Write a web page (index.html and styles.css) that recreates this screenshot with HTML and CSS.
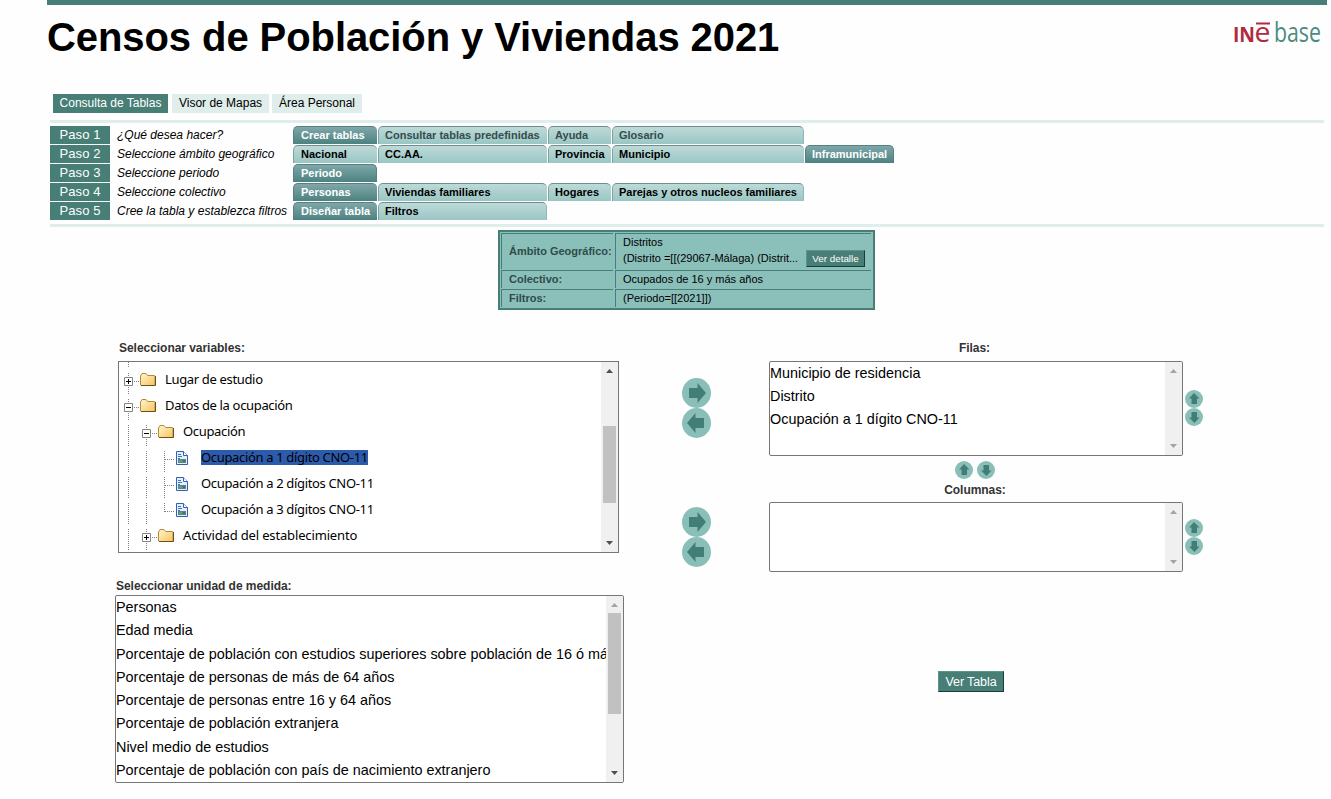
FILE: index.html
```html
<!DOCTYPE html>
<html lang="es">
<head>
<meta charset="utf-8">
<title>Censos de Población y Viviendas 2021</title>
<link rel="stylesheet" href="styles.css">
</head>
<body>
<svg class="defs" aria-hidden="true">
  <defs>
    <linearGradient id="fold" x1="0" y1="0" x2="1" y2="1"><stop offset="0" stop-color="#fff6cf"/><stop offset="1" stop-color="#f6c35c"/></linearGradient>
    <symbol id="folder" viewBox="0 0 16 13"><path d="M.5 12V3l1.500-2.500h4L7.500 2.500h7l.5.500v9.500H1z" fill="url(#fold)" stroke="#b48a3c"/><path d="M1 12.500H15.500V3" fill="none" stroke="#6b4f1c"/></symbol>
    <symbol id="file" viewBox="0 0 12 14"><path d="M.5.500h7l4 4v9H.5z" fill="#e4f0fd" stroke="#2f62b4"/><path d="M7.500.500v4h4" fill="#fff" stroke="#2f62b4"/><path d="M2 3.500h3M2 5.500h4M2 7.500h2" stroke="#4471bd"/><path d="M2 8h8v4H2z" fill="#6b7c92"/><path d="M3 9h3v2H3z" fill="#50ad5d"/><path d="M7 9h2v2H7z" fill="#30844b"/></symbol>
    <symbol id="right" viewBox="0 0 29 30"><ellipse cx="14.500" cy="15" rx="14.500" ry="15" fill="#8abfb8"/><path d="M7 10h8.500V5L24 15l-8.500 10v-5H7z" fill="#437e76"/></symbol>
    <symbol id="left" viewBox="0 0 29 30"><ellipse cx="14.500" cy="15" rx="14.500" ry="15" fill="#8abfb8"/><path d="M22 10h-8.500V5L5 15l8.500 10v-5H22z" fill="#437e76"/></symbol>
    <symbol id="up" viewBox="0 0 18 18"><circle cx="9" cy="9" r="9" fill="#8abfb8"/><path d="M9 3l5.500 5.500H12V14H6.500V8.500H4z" fill="#437e76"/></symbol>
    <symbol id="down" viewBox="0 0 18 18"><circle cx="9" cy="9" r="9" fill="#8abfb8"/><path d="M9.500 15L4 9.500h2.500V4H12v5.500h2.500z" fill="#437e76"/></symbol>
    <symbol id="plus" viewBox="0 0 9 9"><path d="M.5.500h8v8h-8z" fill="#fff" stroke="#848484"/><path d="M2 4.500h5M4.500 2v5" stroke="#000"/></symbol>
    <symbol id="minus" viewBox="0 0 9 9"><path d="M.5.500h8v8h-8z" fill="#fff" stroke="#848484"/><path d="M2 4.500h5" stroke="#000"/></symbol>
    <symbol id="sup" viewBox="0 0 7 4"><path d="M3.500 0L7 4H0z" fill="currentColor"/></symbol>
    <symbol id="sdown" viewBox="0 0 7 4"><path d="M0 0h7L3.500 4z" fill="currentColor"/></symbol>
  </defs>
</svg>
<div class="topbar"></div>
<header class="header">
  <h1 class="title">Censos de Población y Viviendas 2021</h1>
  <svg class="logo" viewBox="0 0 90 34"><text class="logo-in" x="1" y="28" textLength="22" lengthAdjust="spacingAndGlyphs">IN</text><text class="logo-e" x="22.500" y="28" textLength="16" lengthAdjust="spacingAndGlyphs">e</text><path d="M24 9.500h14" stroke="#b22a40" stroke-width="2"/><text class="logo-base" x="42" y="28" textLength="47" lengthAdjust="spacingAndGlyphs">base</text></svg>
</header>
<nav class="nav"><a class="nav-item nav-on">Consulta de Tablas</a><a class="nav-item nav-maps">Visor de Mapas</a><a class="nav-item nav-area">Área Personal</a></nav>
<section class="steps">
  <div class="step"><b class="paso">Paso 1</b><i class="what">¿Qué desea hacer?</i><a class="tab on">Crear tablas</a><a class="tab dim">Consultar tablas predefinidas</a><a class="tab dim">Ayuda</a><a class="tab dim">Glosario</a></div>
  <div class="step"><b class="paso">Paso 2</b><i class="what">Seleccione ámbito geográfico</i><a class="tab">Nacional</a><a class="tab">CC.AA.</a><a class="tab">Provincia</a><a class="tab">Municipio</a><a class="tab on">Inframunicipal</a></div>
  <div class="step"><b class="paso">Paso 3</b><i class="what">Seleccione periodo</i><a class="tab on">Periodo</a></div>
  <div class="step"><b class="paso">Paso 4</b><i class="what">Seleccione colectivo</i><a class="tab on">Personas</a><a class="tab">Viviendas familiares</a><a class="tab">Hogares</a><a class="tab">Parejas y otros nucleos familiares</a></div>
  <div class="step"><b class="paso">Paso 5</b><i class="what">Cree la tabla y establezca filtros</i><a class="tab on">Diseñar tabla</a><a class="tab">Filtros</a></div>
</section>
<section class="summary">
  <div class="sum-label">Ámbito Geográfico:</div>
  <div class="sum-value scope"><span>Distritos<br>(Distrito =[[(29067-Málaga) (Distrit...</span><button class="btn detail">Ver detalle</button></div>
  <div class="sum-label">Colectivo:</div><div class="sum-value">Ocupados de 16 y más años</div>
  <div class="sum-label">Filtros:</div><div class="sum-value">(Periodo=[[2021]])</div>
</section>
<main class="work">
  <div class="col-left">
    <h2 class="label label-vars">Seleccionar variables:</h2>
    <div class="box tree">
      <div class="nodes">
        <div class="node first"><svg class="g0" viewBox="0 0 21 6"><path class="dots" d="M9.500 0v6"/></svg></div>
        <div class="node"><svg class="g0" viewBox="0 0 21 22"><path class="dots" d="M9.500 1v21M15 9.500h5"/><use href="#plus" x="5" y="5" width="9" height="9"/></svg><svg class="folder"><use href="#folder"/></svg><span>Lugar de estudio</span></div>
        <div class="node"><svg class="g0" viewBox="0 0 21 22"><path class="dots" d="M9.500 1v21M15 9.500h5"/><use href="#minus" x="5" y="5" width="9" height="9"/></svg><svg class="folder"><use href="#folder"/></svg><span>Datos de la ocupación</span></div>
        <div class="node"><svg class="g1" viewBox="0 0 39 22"><path class="dots" d="M9.500 1v21M27.500 1v21M33 9.500h5"/><use href="#minus" x="23" y="5" width="9" height="9"/></svg><svg class="folder"><use href="#folder"/></svg><span>Ocupación</span></div>
        <div class="node"><svg class="g2" viewBox="0 0 57 22"><path class="dots" d="M9.500 1v21M27.500 1v21M45.500 1v21M46 9.500h9"/></svg><svg class="file"><use href="#file"/></svg><span class="picked">Ocupación a 1 dígito CNO-11</span></div>
        <div class="node"><svg class="g2" viewBox="0 0 57 22"><path class="dots" d="M9.500 1v21M27.500 1v21M45.500 1v21M46 9.500h9"/></svg><svg class="file"><use href="#file"/></svg><span>Ocupación a 2 dígitos CNO-11</span></div>
        <div class="node"><svg class="g2" viewBox="0 0 57 22"><path class="dots" d="M9.500 1v21M27.500 1v21M45.500 1v9M46 9.500h9"/></svg><svg class="file"><use href="#file"/></svg><span>Ocupación a 3 dígitos CNO-11</span></div>
        <div class="node roomy"><svg class="g1" viewBox="0 0 39 22"><path class="dots" d="M9.500 1v21M27.500 1v21M33 9.500h5"/><use href="#plus" x="23" y="5" width="9" height="9"/></svg><svg class="folder"><use href="#folder"/></svg><span>Actividad del establecimiento</span></div>
      </div>
      <div class="bar"><svg class="arr"><use href="#sup"/></svg><div class="thumb thumb-tree"></div><svg class="arr arr-end"><use href="#sdown"/></svg></div>
    </div>
    <h2 class="label label-unit">Seleccionar unidad de medida:</h2>
    <div class="box units">
      <div class="options"><div>Personas</div><div>Edad media</div><div>Porcentaje de población con estudios superiores sobre población de 16 ó más</div><div>Porcentaje de personas de más de 64 años</div><div>Porcentaje de personas entre 16 y 64 años</div><div>Porcentaje de población extranjera</div><div>Nivel medio de estudios</div><div>Porcentaje de población con país de nacimiento extranjero</div></div>
      <div class="bar"><svg class="arr off"><use href="#sup"/></svg><div class="thumb thumb-units"></div><svg class="arr arr-end"><use href="#sdown"/></svg></div>
    </div>
  </div>
  <div class="col-arrows">
    <svg class="big"><use href="#right"/></svg><svg class="big"><use href="#left"/></svg>
    <svg class="big second"><use href="#right"/></svg><svg class="big"><use href="#left"/></svg>
  </div>
  <div class="col-right">
    <h2 class="label label-rows">Filas:</h2>
    <div class="line">
      <div class="box rows"><div class="options"><div>Municipio de residencia</div><div>Distrito</div><div>Ocupación a 1 dígito CNO-11</div></div><div class="bar off"><svg class="arr"><use href="#sup"/></svg><svg class="arr arr-end"><use href="#sdown"/></svg></div></div>
      <div class="order order-rows"><svg class="small"><use href="#up"/></svg><svg class="small"><use href="#down"/></svg></div>
    </div>
    <div class="swap"><svg class="small"><use href="#up"/></svg><svg class="small"><use href="#down"/></svg></div>
    <h2 class="label label-cols">Columnas:</h2>
    <div class="line">
      <div class="box cols"><div class="options"></div><div class="bar off"><svg class="arr"><use href="#sup"/></svg><svg class="arr arr-end"><use href="#sdown"/></svg></div></div>
      <div class="order"><svg class="small"><use href="#up"/></svg><svg class="small"><use href="#down"/></svg></div>
    </div>
    <button class="btn view">Ver Tabla</button>
  </div>
</main>
</body>
</html>
```
FILE: styles.css
```css
* { box-sizing: border-box; }
html, body { height: 100%; overflow: hidden; }
body { margin: 0; background: #fefefe; color: #000; font-family: "Liberation Sans", Arial, sans-serif; font-size: 12px; }
svg { display: block; flex: none; }
.defs { position: absolute; width: 0; height: 0; }
.topbar { height: 5px; margin: 0 4px 0 47px; background: #477e76; }
.header { display: flex; justify-content: space-between; height: 89px; padding: 9px 9px 0 47px; }
.title { margin: 0; font-size: 40px; line-height: 46px; letter-spacing: -.08px; white-space: nowrap; }
.logo { width: 90px; height: 34px; }
.logo-in { fill: #b22a40; font: bold 21px "Open Sans", sans-serif; }
.logo-e { fill: #b22a40; font: 27px "Open Sans", sans-serif; }
.logo-base { fill: #4b8a80; font: 27px "Open Sans", sans-serif; }
.nav { display: flex; height: 26px; padding-left: 53px; }
.nav-item { width: 97px; height: 19px; margin-right: 3px; background: #dfedeb; line-height: 18px; text-align: center; white-space: nowrap; }
.nav-on { width: 115px; margin-right: 4px; background: #477e76; color: #fff; }
.nav-area { width: 90px; }
.steps { height: 107px; margin: 0 7px 0 50px; padding-top: 3px; border-top: 3px solid #dfedeb; border-bottom: 3px solid #dfedeb; }
.step { display: grid; grid-template-columns: 60px 183px 85px 170px 64px 193px 90px; height: 18px; margin-bottom: 1px; line-height: 18px; white-space: nowrap; }
.paso { background: #477e76; color: #fff; font-size: 13px; font-weight: normal; letter-spacing: .1px; text-align: center; }
.what { padding-left: 7px; line-height: 18px; }
.tab { margin-right: 1px; padding-left: 6px; border-top: 1px solid #6e8f90; border-left: 1px solid #7ca3a3; border-radius: 5px 5px 0 0; background: linear-gradient(#bddad8, #9ac6c4); font-size: 11px; font-weight: bold; line-height: 17px; }
.tab:nth-child(3) { padding-left: 7px; }
.tab:last-child { border-right: 1px solid #91b9b7; }
.tab.dim { color: #344d4d; }
.tab.on { border-color: #597f82; background: linear-gradient(#7fa7aa, #4c8280); color: #fff; }
.summary { display: grid; grid-template-columns: 112px 256px; grid-template-rows: 36px 18px 18px; gap: 1px 2px; width: 377px; height: 80px; margin: 3px 0 0 498px; padding: 1px; border: 2px solid #477e76; background: #8bbfba; font-size: 11px; line-height: 17px; }
.sum-label { display: flex; align-items: center; padding-left: 7px; border-top: 1px solid #477e76; border-left: 1px solid #477e76; color: #2e4d4a; font-weight: bold; white-space: nowrap; }
.sum-value { padding-left: 7px; border-top: 1px solid #477e76; border-left: 1px solid #477e76; white-space: nowrap; }
.scope { display: flex; align-items: flex-start; line-height: 16px; }
.btn { padding: 0; border: 1px solid; border-color: #5b948c #163f39 #163f39 #5b948c; background: #477e76; color: #fff; font-family: inherit; }
.detail { width: 59px; height: 17px; margin: 16px 6px 0 auto; font-size: 9.8px; line-height: 15px; }
.work { display: flex; padding: 31px 0 0 115px; }
.col-left { width: 509px; }
.label { margin: 0; color: #333; font-size: 12px; line-height: 14px; letter-spacing: -.04px; font-weight: bold; white-space: nowrap; }
.label-vars { height: 20px; padding-left: 4px; }
.label-unit { height: 16px; margin-top: 26px; padding-left: 1px; }
.box { display: flex; border: 1px solid #767676; background: #fff; overflow: hidden; }
.tree { width: 501px; height: 192px; margin-left: 3px; }
.nodes { flex: 1; min-width: 0; overflow: hidden; font: 13px/14px "Noto Sans", "Open Sans", sans-serif; letter-spacing: -.34px; }
.node { display: flex; height: 26px; white-space: nowrap; }
.roomy { letter-spacing: -.15px; }
.first { height: 10px; }
.first .g0 { height: 6px; }
.dots { fill: none; stroke: #808080; stroke-dasharray: 1 1; }
.g0 { width: 21px; height: 22px; }
.g1 { width: 39px; height: 22px; }
.g2 { width: 57px; height: 22px; }
.folder { width: 16px; height: 13px; margin: 1px 9px 0 0; }
.file { width: 12px; height: 14px; margin: 1px 13px 0 0; }
.picked { height: 15px; background: #2d5bab; }
.units { width: 509px; height: 188px; border-radius: 2px; }
.options { flex: 1; min-width: 0; overflow: hidden; font-size: 14.4px; line-height: 23.3px; white-space: nowrap; }
.rows .options { line-height: 23px; }
.bar { display: flex; flex-direction: column; flex: none; width: 17px; padding: 7px 0 7px; background: #f0f0f0; color: #505050; }
.bar.off, .arr.off { color: #a3a3a3; }
.arr { width: 7px; height: 4px; margin-left: 5px; }
.arr-end { margin-top: auto; }
.thumb { width: 13px; margin-left: 2px; background: #c1c1c1; }
.thumb-tree { height: 77px; margin-top: 53px; }
.thumb-units { height: 101px; margin-top: 6px; }
.col-arrows { width: 29px; margin-left: 58px; padding-top: 37px; }
.big { width: 29px; height: 30px; }
.second { margin-top: 69px; }
.col-right { width: 434px; margin-left: 58px; }
.label-rows { width: 411px; height: 20px; text-align: center; }
.line { display: flex; align-items: center; gap: 2px; }
.order-rows { padding-bottom: 1px; }
.rows { width: 414px; height: 95px; border-radius: 2px; }
.cols { width: 414px; height: 70px; border-radius: 2px; }
.small { width: 18px; height: 18px; }
.swap { display: flex; gap: 4px; padding: 5px 0 0 186px; }
.label-cols { width: 412px; height: 23px; padding-top: 4px; text-align: center; }
.view { display: block; width: 66px; height: 21px; margin: 99px 0 0 169px; font-size: 12.5px; letter-spacing: -.1px; }
```
